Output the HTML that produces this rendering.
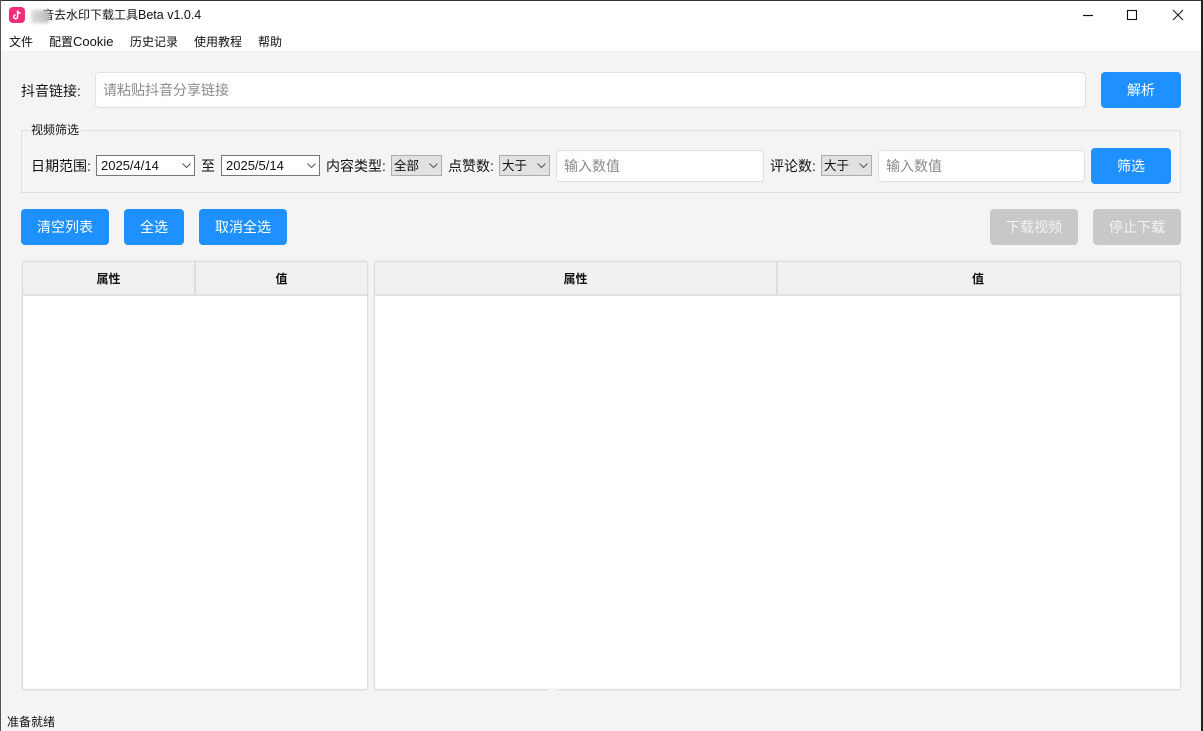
<!DOCTYPE html>
<html lang="zh-CN">
<head>
<meta charset="utf-8">
<title>抖音去水印下载工具Beta v1.0.4</title>
<style>
html,body{margin:0;padding:0}
body{width:1203px;height:731px;overflow:hidden;position:relative;background:#f4f4f4;font-family:"Liberation Sans","Noto Sans CJK SC",sans-serif;color:#111}
div,span.a,svg.a{position:absolute;box-sizing:border-box}
.t{white-space:nowrap;font-size:14px;height:20px;line-height:20px}
.m{white-space:nowrap;font-size:12px;height:16px;line-height:16px;top:34px;color:#111}
.l{font-size:13px}
.btn{background:#1e90ff;color:#fff;border-radius:4px;font-size:14px;text-align:center;line-height:36px;height:36px}
.off{background:#c8c8c8;color:#f2f2f2}
.inp{background:#fff;border:1px solid #e0e0e0;border-radius:4px;color:#8a8a8a;font-size:14px;white-space:nowrap}
.date{background:#fff;border:1px solid #767676;height:21px;top:155px;width:99px;font-size:13px;line-height:19px;padding-left:4px;color:#111}
.sel{background:#e1e1e1;border:1px solid #adadad;height:21px;top:155px;width:51px;font-size:12.5px;line-height:20px;padding-left:2px;color:#111;white-space:nowrap}
.chev{position:absolute;top:7px;right:3px;width:9px;height:6px}
.tbl{background:#fff;border:1px solid #dcdcdc;outline:1px solid #ececec;border-radius:3px;top:261px;height:429px;overflow:hidden}
.hd{left:0;top:0;height:34px;background:#f0f0f0;border-bottom:2px solid #e2e2e2;font-size:12px;font-weight:700;text-align:center;line-height:34px;color:#111}
.sp{border-right:2px solid #dedede}
</style>
</head>
<body>
<!-- window chrome -->
<div style="left:0;top:0;width:1203px;height:30px;background:#fff"></div>
<div style="left:0;top:30px;width:1203px;height:21px;background:#fff"></div>
<svg class="a" style="left:9px;top:7px" width="16" height="16" viewBox="0 0 16 16"><rect width="16" height="16" rx="4" fill="#f32c78"/><path d="M8.6 3.6v6.2a1.9 1.9 0 1 1-1.9-1.9M8.6 3.6c.3 1.5 1.4 2.4 2.9 2.6" fill="none" stroke="#fff" stroke-width="1.5"/></svg>
<div class="t" style="left:30px;top:7px;font-size:12px;height:17px;line-height:17px;color:#111"><span style="display:inline-block;width:12px"></span>音去水印下载工具<span style="font-size:12.5px">Beta v1.0.4</span></div>
<div style="left:31px;top:10px;width:18px;height:13px;background:linear-gradient(90deg,#dcdcd8,#bdbdb9);filter:blur(1.5px)"></div>
<svg class="a" style="left:1082px;top:9px" width="12" height="12" viewBox="0 0 12 12"><path d="M1 6.5h10" stroke="#111" stroke-width="1.2"/></svg>
<svg class="a" style="left:1126px;top:9px" width="12" height="12" viewBox="0 0 12 12"><rect x="1.5" y="1.5" width="9" height="9" fill="none" stroke="#111" stroke-width="1.1"/></svg>
<svg class="a" style="left:1172px;top:9px" width="12" height="12" viewBox="0 0 12 12"><path d="M1 1l10 10M11 1L1 11" stroke="#111" stroke-width="1"/></svg>
<!-- menu -->
<div class="m" style="left:9px">文件</div>
<div class="m" style="left:49px">配置<span class="l">Cookie</span></div>
<div class="m" style="left:130px">历史记录</div>
<div class="m" style="left:194px">使用教程</div>
<div class="m" style="left:258px">帮助</div>
<!-- URL row -->
<div class="t" style="left:21px;top:81px">抖音链接:</div>
<div class="inp" style="left:95px;top:72px;width:991px;height:36px;line-height:34px;padding-left:7px">请粘贴抖音分享链接</div>
<div class="btn" style="left:1101px;top:72px;width:80px">解析</div>
<!-- filter group -->
<div style="left:21px;top:130px;width:1160px;height:63px;border:1px solid #e0e0e0"></div>
<div class="t" style="left:29px;top:122px;font-size:12px;padding:0 2px;background:#f4f4f4;height:16px;line-height:16px">视频筛选</div>
<div class="t" style="left:31px;top:156px">日期范围:</div>
<div class="date" style="left:96px">2025/4/14<svg class="chev" viewBox="0 0 9 6"><path d="M.5 .5l4 4 4-4" fill="none" stroke="#555" stroke-width="1"/></svg></div>
<div class="t" style="left:201px;top:156px">至</div>
<div class="date" style="left:221px">2025/5/14<svg class="chev" viewBox="0 0 9 6"><path d="M.5 .5l4 4 4-4" fill="none" stroke="#555" stroke-width="1"/></svg></div>
<div class="t" style="left:326px;top:156px">内容类型:</div>
<div class="sel" style="left:391px">全部<svg class="chev" viewBox="0 0 9 6"><path d="M.5 .5l4 4 4-4" fill="none" stroke="#555" stroke-width="1"/></svg></div>
<div class="t" style="left:448px;top:156px">点赞数:</div>
<div class="sel" style="left:499px">大于<svg class="chev" viewBox="0 0 9 6"><path d="M.5 .5l4 4 4-4" fill="none" stroke="#555" stroke-width="1"/></svg></div>
<div class="inp" style="left:556px;top:150px;width:208px;height:32px;line-height:30px;padding-left:7px">输入数值</div>
<div class="t" style="left:770px;top:156px">评论数:</div>
<div class="sel" style="left:821px">大于<svg class="chev" viewBox="0 0 9 6"><path d="M.5 .5l4 4 4-4" fill="none" stroke="#555" stroke-width="1"/></svg></div>
<div class="inp" style="left:878px;top:150px;width:207px;height:32px;line-height:30px;padding-left:7px">输入数值</div>
<div class="btn" style="left:1091px;top:148px;width:80px">筛选</div>
<!-- action buttons -->
<div class="btn" style="left:21px;top:209px;width:88px">清空列表</div>
<div class="btn" style="left:124px;top:209px;width:60px">全选</div>
<div class="btn" style="left:199px;top:209px;width:88px">取消全选</div>
<div class="btn off" style="left:990px;top:209px;width:88px">下载视频</div>
<div class="btn off" style="left:1093px;top:209px;width:88px">停止下载</div>
<!-- tables -->
<div class="tbl" style="left:22px;width:346px">
  <div class="hd sp" style="width:173px;left:0">属性</div>
  <div class="hd" style="left:173px;width:171px">值</div>
</div>
<div class="tbl" style="left:374px;width:807px">
  <div class="hd sp" style="width:403px;left:0">属性</div>
  <div class="hd" style="left:403px;width:402px;padding-right:2px">值</div>
</div>
<div style="left:548px;top:688px;width:10px;height:3px;background:#f4f4f4"></div>
<!-- status -->
<div class="t" style="left:7px;top:714px;font-size:12px;height:16px;line-height:16px">准备就绪</div>
<!-- window edges -->
<div style="left:0;top:0;width:1203px;height:1px;background:#333"></div>
<div style="left:0;top:0;width:1px;height:731px;background:#555"></div>
<div style="left:1201px;top:0;width:2px;height:731px;background:#222"></div>
</body>
</html>
